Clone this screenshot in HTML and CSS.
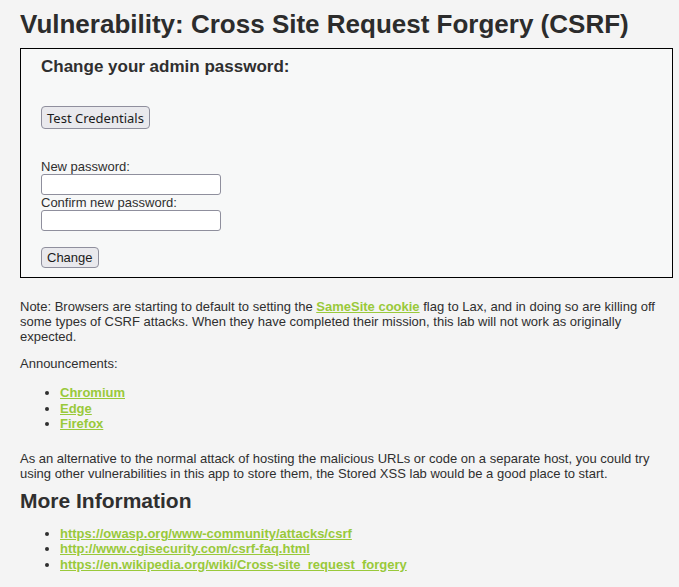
FILE: index.html
```html
<!DOCTYPE html>
<html>
<head>
<meta charset="utf-8">
<title>CSRF</title>
<link rel="stylesheet" href="styles.css">
</head>
<body>
<div class="page">
  <h1 class="title">Vulnerability: Cross Site Request Forgery (CSRF)</h1>
  <div class="code-area">
    <h3 class="form-title">Change your admin password:</h3>
    <button class="btn btn-test" type="button">Test Credentials</button>
    <form class="pw-form">
      <label class="field-label">New password:</label>
      <input class="field" type="password">
      <label class="field-label">Confirm new password:</label>
      <input class="field" type="password">
      <button class="btn btn-change" type="button">Change</button>
    </form>
  </div>
  <p class="para note">Note: Browsers are starting to default to setting the <a class="inline-link" href="#">SameSite cookie</a> flag to Lax, and in doing so are killing off some types of CSRF attacks. When they have completed their mission, this lab will not work as originally expected.</p>
  <p class="para announce">Announcements:</p>
  <ul class="links">
    <li><a href="#">Chromium</a></li>
    <li><a href="#">Edge</a></li>
    <li><a href="#">Firefox</a></li>
  </ul>
  <p class="para alt">As an alternative to the normal attack of hosting the malicious URLs or code on a separate host, you could try using other vulnerabilities in this app to store them, the Stored XSS lab would be a good place to start.</p>
  <h2 class="subtitle">More Information</h2>
  <ul class="links more">
    <li><a href="#">https://owasp.org/www-community/attacks/csrf</a></li>
    <li><a href="#">http://www.cgisecurity.com/csrf-faq.html</a></li>
    <li><a href="#">https://en.wikipedia.org/wiki/Cross-site_request_forgery</a></li>
  </ul>
</div>
</body>
</html>
```
FILE: styles.css
```css
html, body {
  margin: 0;
  padding: 0;
  background: #f4f4f4;
}
body {
  font-family: "Liberation Sans", Arial, sans-serif;
  font-size: 13px;
  color: #2f2f2f;
}
.page {
  padding: 0 6px 0 20px;
}
.title {
  font-size: 26px;
  line-height: 30px;
  font-weight: bold;
  margin: 9px 0 9px;
  color: #2c2c2c;
}
.code-area {
  background: #f7f8f8;
  border: 1px solid #000;
  padding: 8px 20px 9px;
}
.form-title {
  font-size: 17px;
  line-height: 20px;
  margin: 0 0 29px;
}
.btn {
  display: block;
  background: #e9e9ed;
  border: 1px solid #8f8f9d;
  border-radius: 4px;
  color: #1b1b1b;
  padding: 0 5px;
}
.btn-test {
  font-family: "Noto Sans", "DejaVu Sans", sans-serif;
  font-size: 13px;
  height: 23px;
}
.pw-form {
  display: flex;
  flex-direction: column;
  align-items: flex-start;
  margin-top: 30px;
}
.field-label {
  line-height: 15px;
}
.field {
  width: 180px;
  height: 21px;
  box-sizing: border-box;
  border: 1px solid #8f8f9d;
  border-radius: 3px;
  background: #fff;
  margin: 0;
}
.btn-change {
  font-family: "Liberation Sans", Arial, sans-serif;
  font-size: 13px;
  height: 21px;
  margin-top: 16px;
}
.para {
  margin: 13px 0 0;
  line-height: 14.8px;
}
.note {
  margin-top: 22px;
}
a {
  color: #99c93a;
  font-weight: bold;
}
.inline-link {
  line-height: inherit;
}
.links {
  margin: 13px 0 0;
  padding-left: 40px;
  line-height: 15.4px;
}
.links li {
  height: 15.4px;
}
.alt {
  margin-top: 21px;
}
.subtitle {
  font-size: 21px;
  line-height: 24px;
  margin: 7px 0 0;
}
.links.more {
  margin-top: 13px;
}
```
